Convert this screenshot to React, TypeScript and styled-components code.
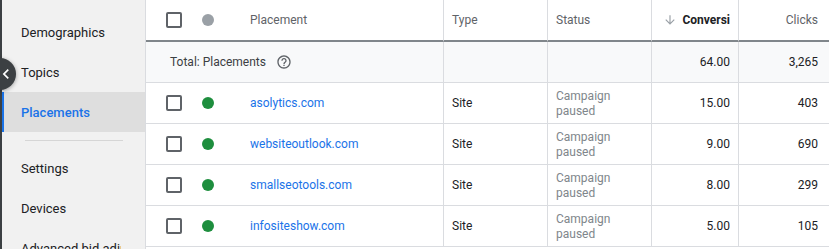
import styled, { createGlobalStyle } from 'styled-components'

const GlobalStyle = createGlobalStyle`
    html, body {
        margin: 0;
        padding: 0;
        background: #ffffff;
        overflow: hidden;
    }
    body {
        font-family: Roboto, 'Noto Sans', Arial, sans-serif;
        -webkit-font-smoothing: antialiased;
    }
`

const Page = styled.div`
    display: flex;
    width: 829px;
    height: 249px;
    overflow: hidden;
    position: relative;
`

const Sidebar = styled.nav`
    flex: 0 0 146px;
    width: 146px;
    min-width: 0;
    background: #f1f1f1;
    border-left: 2px solid #3c4043;
    border-right: 1px solid #dadce0;
    box-sizing: border-box;
    padding-top: 12px;
    display: flex;
    flex-direction: column;
    overflow: hidden;
`

const NavItem = styled.div<{ $active?: boolean }>`
    height: 40px;
    flex: 0 0 40px;
    display: flex;
    align-items: center;
    padding: 0 24px 0 17px;
    margin-left: -2px;
    border-left: 4px solid ${(p) => (p.$active ? '#1a73e8' : 'transparent')};
    background: ${(p) => (p.$active ? '#dedede' : 'transparent')};
    color: ${(p) => (p.$active ? '#1a73e8' : '#202124')};
    font-size: 13px;
    font-weight: ${(p) => (p.$active ? 500 : 400)};
    white-space: nowrap;
    overflow: hidden;
    min-width: 0;
`

const NavLabel = styled.span`
    overflow: hidden;
    min-width: 0;
`

const Divider = styled.div`
    height: 1px;
    background: #d6d6d6;
    margin: 8px 22px 7px 23px;
    flex: 0 0 1px;
`

const CollapseButton = styled.div`
    position: absolute;
    left: -16px;
    top: 58px;
    width: 32px;
    height: 32px;
    border-radius: 50%;
    background: #3c4043;
    box-shadow: 0 1px 4px rgba(0, 0, 0, 0.35);
    display: flex;
    align-items: center;
    justify-content: flex-end;
    padding-right: 0;
    box-sizing: border-box;
`

const Table = styled.div`
    flex: 1;
    min-width: 0;
    display: grid;
    grid-template-columns: 298px 104px 104px 87px 1fr;
    grid-auto-rows: min-content;
    font-size: 12px;
    color: #202124;
`

const Cell = styled.div<{ $align?: 'left' | 'right'; $last?: boolean; $kind?: 'head' | 'total' | 'row' }>`
    height: 40px;
    min-width: 0;
    display: flex;
    align-items: center;
    justify-content: ${(p) => (p.$align === 'right' ? 'flex-end' : 'flex-start')};
    padding: ${(p) => (p.$last ? '0 11px 0 8px' : '0 8px')};
    border-right: ${(p) => (p.$last ? 'none' : '1px solid #dadce0')};
    border-bottom: ${(p) => (p.$kind === 'head' ? '2px solid #80868b' : '1px solid #dadce0')};
    background: ${(p) => (p.$kind === 'total' ? '#f8f9fa' : '#ffffff')};
    color: ${(p) => (p.$kind === 'head' ? '#5f6368' : '#202124')};
    white-space: nowrap;
    overflow: hidden;
`

const SelectCell = styled(Cell)`
    padding: 0 0 0 20px;
`

const TotalCell = styled(Cell)`
    padding: 0 0 0 24px;
    color: #3c4043;
    gap: 10px;
`

const Checkbox = styled.div`
    width: 16px;
    height: 16px;
    box-sizing: border-box;
    border: 2px solid #5f6368;
    border-radius: 2px;
    flex: 0 0 16px;
`

const Dot = styled.span<{ $color: string }>`
    width: 12px;
    height: 12px;
    border-radius: 50%;
    background: ${(p) => p.$color};
    margin: 0 36px 0 20px;
    flex: 0 0 12px;
`

const PlacementLink = styled.a`
    color: #1a73e8;
    text-decoration: none;
`

const HeadLabel = styled.span<{ $bold?: boolean }>`
    color: ${(p) => (p.$bold ? '#202124' : '#5f6368')};
    font-weight: ${(p) => (p.$bold ? 700 : 400)};
    display: flex;
    align-items: center;
    gap: 5px;
`

const StatusText = styled.span`
    color: #80868b;
    white-space: normal;
    line-height: 15px;
    padding-top: 1px;
`

const rows = [
    { site: 'asolytics.com', conv: '15.00', clicks: '403' },
    { site: 'websiteoutlook.com', conv: '9.00', clicks: '690' },
    { site: 'smallseotools.com', conv: '8.00', clicks: '299' },
    { site: 'infositeshow.com', conv: '5.00', clicks: '105' },
]

function HelpIcon() {
    return (
        <svg width="16" height="16" viewBox="0 0 24 24" fill="#5f6368">
            <path d="M11 18h2v-2h-2v2zm1-16C6.48 2 2 6.48 2 12s4.48 10 10 10 10-4.48 10-10S17.52 2 12 2zm0 18c-4.41 0-8-3.59-8-8s3.59-8 8-8 8 3.59 8 8-3.59 8-8 8zm0-14c-2.21 0-4 1.79-4 4h2c0-1.1.9-2 2-2s2 .9 2 2c0 2-3 1.75-3 5h2c0-2.25 3-2.5 3-5 0-2.21-1.79-4-4-4z" />
        </svg>
    )
}

function ArrowDown() {
    return (
        <svg width="14" height="14" viewBox="0 0 24 24" fill="#9aa0a6">
            <path d="M20 12l-1.41-1.41L13 16.17V4h-2v12.17l-5.58-5.59L4 12l8 8 8-8z" />
        </svg>
    )
}

export default function App() {
    return (
        <Page>
            <GlobalStyle />
            <Sidebar>
                <NavItem>Demographics</NavItem>
                <NavItem>Topics</NavItem>
                <NavItem $active>Placements</NavItem>
                <Divider />
                <NavItem>Settings</NavItem>
                <NavItem>Devices</NavItem>
                <NavItem>
                    <NavLabel>Advanced bid adjustments</NavLabel>
                </NavItem>
            </Sidebar>
            <CollapseButton>
                <svg width="20" height="20" viewBox="0 0 24 24" fill="#ffffff">
                    <path d="M15.41 7.41L14 6l-6 6 6 6 1.41-1.41L10.83 12z" />
                </svg>
            </CollapseButton>
            <Table>
                <SelectCell $kind="head">
                    <Checkbox />
                    <Dot $color="#9aa0a6" />
                    <HeadLabel>Placement</HeadLabel>
                </SelectCell>
                <Cell $kind="head">
                    <HeadLabel>Type</HeadLabel>
                </Cell>
                <Cell $kind="head">
                    <HeadLabel>Status</HeadLabel>
                </Cell>
                <Cell $kind="head" $align="right">
                    <HeadLabel $bold>
                        <ArrowDown />
                        Conversi
                    </HeadLabel>
                </Cell>
                <Cell $kind="head" $align="right" $last>
                    <HeadLabel>Clicks</HeadLabel>
                </Cell>

                <TotalCell $kind="total">
                    Total: Placements
                    <HelpIcon />
                </TotalCell>
                <Cell $kind="total" />
                <Cell $kind="total" />
                <Cell $kind="total" $align="right">
                    64.00
                </Cell>
                <Cell $kind="total" $align="right" $last>
                    3,265
                </Cell>

                {rows.map((r) => (
                    <Row key={r.site} {...r} />
                ))}
            </Table>
        </Page>
    )
}

function Row({ site, conv, clicks }: { site: string; conv: string; clicks: string }) {
    return (
        <>
            <SelectCell $kind="row">
                <Checkbox />
                <Dot $color="#1e8e3e" />
                <PlacementLink href="#">{site}</PlacementLink>
            </SelectCell>
            <Cell $kind="row">Site</Cell>
            <Cell $kind="row">
                <StatusText>
                    Campaign
                    <br />
                    paused
                </StatusText>
            </Cell>
            <Cell $kind="row" $align="right">
                {conv}
            </Cell>
            <Cell $kind="row" $align="right" $last>
                {clicks}
            </Cell>
        </>
    )
}
